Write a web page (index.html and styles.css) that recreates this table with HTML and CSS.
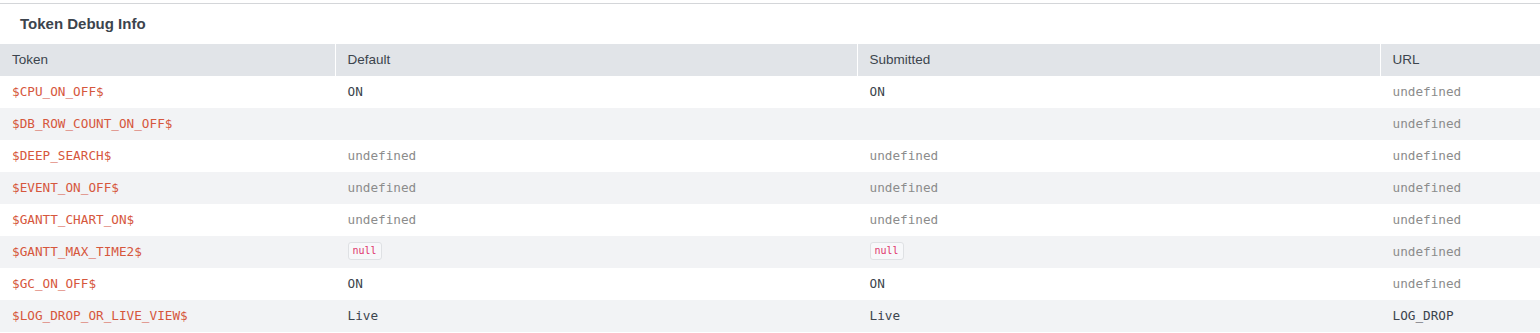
FILE: index.html
```html
<!DOCTYPE html>
<html>
<head>
<meta charset="utf-8">
<link rel="stylesheet" href="styles.css">
</head>
<body>
<div class="panel">
  <h2 class="title">Token Debug Info</h2>
  <table class="tokens">
    <colgroup>
      <col class="c-token"><col class="c-default"><col class="c-submitted"><col class="c-url">
    </colgroup>
    <thead>
      <tr><th>Token</th><th>Default</th><th>Submitted</th><th>URL</th></tr>
    </thead>
    <tbody>
      <tr><td class="tok">$CPU_ON_OFF$</td><td class="val">ON</td><td class="val">ON</td><td class="undef">undefined</td></tr>
      <tr><td class="tok">$DB_ROW_COUNT_ON_OFF$</td><td class="val"></td><td class="val"></td><td class="undef">undefined</td></tr>
      <tr><td class="tok">$DEEP_SEARCH$</td><td class="undef">undefined</td><td class="undef">undefined</td><td class="undef">undefined</td></tr>
      <tr><td class="tok">$EVENT_ON_OFF$</td><td class="undef">undefined</td><td class="undef">undefined</td><td class="undef">undefined</td></tr>
      <tr><td class="tok">$GANTT_CHART_ON$</td><td class="undef">undefined</td><td class="undef">undefined</td><td class="undef">undefined</td></tr>
      <tr><td class="tok">$GANTT_MAX_TIME2$</td><td class="val"><code class="null">null</code></td><td class="val"><code class="null">null</code></td><td class="undef">undefined</td></tr>
      <tr><td class="tok">$GC_ON_OFF$</td><td class="val">ON</td><td class="val">ON</td><td class="undef">undefined</td></tr>
      <tr><td class="tok">$LOG_DROP_OR_LIVE_VIEW$</td><td class="val">Live</td><td class="val">Live</td><td class="val">LOG_DROP</td></tr>
    </tbody>
  </table>
</div>
</body>
</html>
```
FILE: styles.css
```css
html, body {
  margin: 0;
  padding: 0;
  background: #ffffff;
}
body {
  padding-top: 3px;
  font-family: "Liberation Sans", Arial, sans-serif;
  color: #3c444d;
}
.panel {
  border-top: 1px solid #d4d6d9;
}
.title {
  margin: 0;
  height: 40px;
  box-sizing: border-box;
  padding: 11px 20px 0;
  font-size: 15px;
  font-weight: bold;
  line-height: 18px;
  color: #3c444d;
}
.tokens {
  width: 100%;
  border-collapse: collapse;
  table-layout: fixed;
}
.c-token { width: 335px; }
.c-default { width: 522px; }
.c-submitted { width: 523px; }
.c-url { width: auto; }
.tokens th {
  background: #e1e4e8;
  height: 32px;
  box-sizing: border-box;
  padding: 0 0 2px 12px;
  text-align: left;
  font-weight: normal;
  font-size: 13.5px;
  color: #3c444d;
  border-left: 1px solid #ffffff;
}
.tokens th:first-child {
  border-left: none;
  padding-left: 12px;
}
.tokens td {
  height: 32px;
  box-sizing: border-box;
  padding: 0 0 2px 12px;
  font-family: "DejaVu Sans Mono", "Liberation Mono", monospace;
  font-size: 12.7px;
  white-space: nowrap;
  border-left: 1px solid transparent;
}
.tokens td:first-child {
  border-left: none;
  padding-left: 12px;
}
.tokens tbody tr:nth-child(even) td {
  background: #f2f3f5;
}
.tok { color: #d6573d; }
.val { color: #3c444d; }
.undef { color: #8c8c8c; }
.null {
  display: inline-block;
  font-family: "DejaVu Sans Mono", "Liberation Mono", monospace;
  font-size: 10px;
  line-height: 16px;
  padding: 0 4px;
  color: #e0356d;
  background: #f7f8fa;
  border: 1px solid #dfe1e4;
  border-radius: 3px;
}
```
